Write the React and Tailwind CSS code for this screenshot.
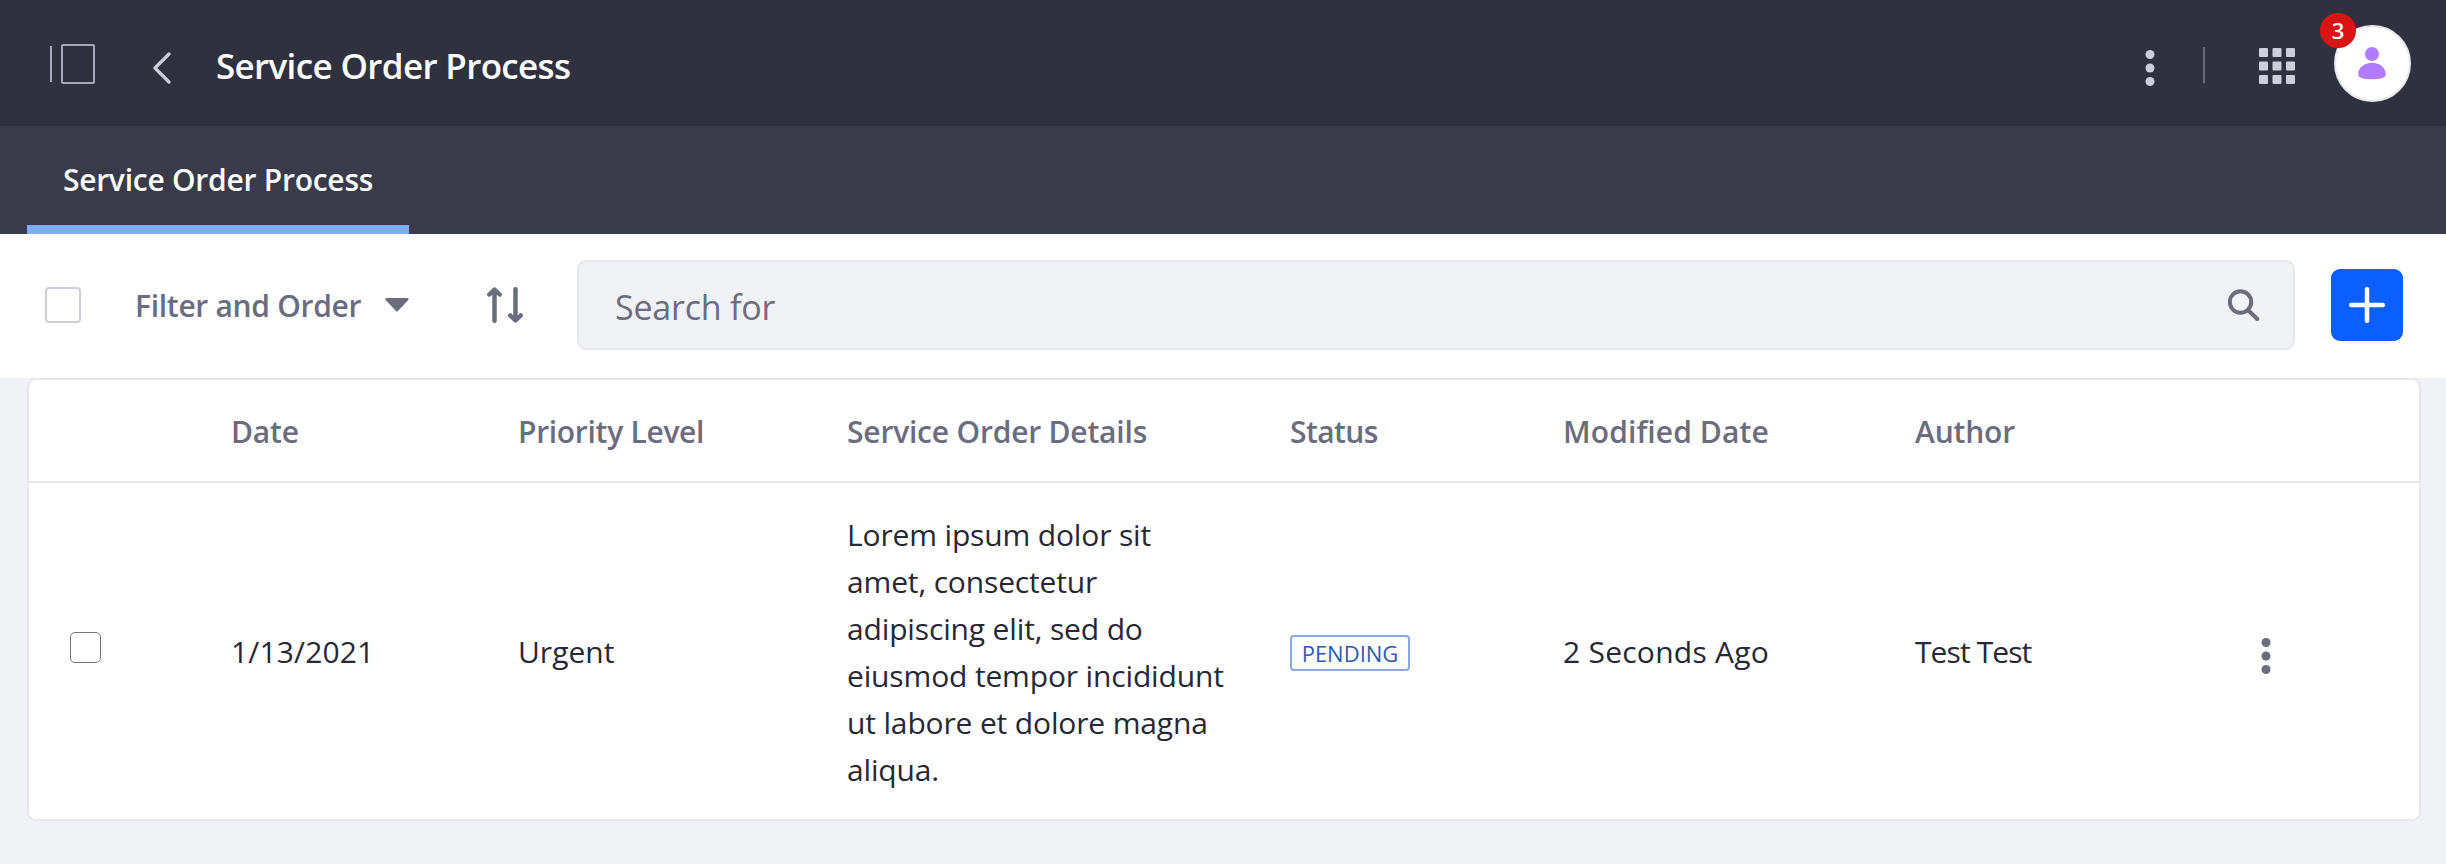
const headers = [
  ["Date", "tracking-[-0.2px]"],
  ["Priority Level", "tracking-[-0.3px]"],
  ["Service Order Details", "tracking-[-0.2px]"],
  ["Status", "tracking-[-0.6px]"],
  ["Modified Date", "tracking-[0.1px]"],
  ["Author", "tracking-[-0.2px]"],
];

const lines = [
  "Lorem ipsum dolor sit",
  "amet, consectetur",
  "adipiscing elit, sed do",
  "eiusmod tempor incididunt",
  "ut labore et dolore magna",
  "aliqua.",
];

const columns = "grid grid-cols-[202px_287px_329px_443px_273px_352px_1fr]";

function Dots({ className }) {
  return (
    <svg className={className} width="36" height="36" viewBox="0 0 36 36" fill="currentColor">
      <circle cx="18" cy="4.5" r="4.5" />
      <circle cx="18" cy="18" r="4.5" />
      <circle cx="18" cy="31.5" r="4.5" />
    </svg>
  );
}

function Header() {
  return (
    <header className="flex h-[126px] items-center bg-[#30313f] text-[#cdced9]">
      <svg className="mt-[2px] ml-[50px] shrink-0" width="45" height="40" viewBox="0 0 45 40" fill="none" stroke="#a7a9bc" strokeWidth="2">
        <path d="M1 2v36" />
        <rect x="12" y="1" width="32" height="38" rx="1" />
      </svg>
      <svg className="mt-[10px] ml-[58px] shrink-0" width="18" height="32" viewBox="0 0 18 32" fill="none" stroke="currentColor" strokeWidth="3.2" strokeLinecap="round" strokeLinejoin="round">
        <path d="M16 2 2 16l14 14" />
      </svg>
      <h1 className="mt-[5px] ml-[45px] text-[35px] leading-[54px] font-semibold tracking-[-0.65px] whitespace-nowrap text-white">Service Order Process</h1>
      <div className="ml-auto flex items-center">
        <Dots className="mt-[10px]" />
        <div className="mt-[4px] mr-[54px] ml-[35px] h-9 w-[2px] bg-[#6b6c7e]" />
        <svg className="mt-[6px]" width="36" height="36" viewBox="0 0 36 36" fill="currentColor">
          {[0, 13.5, 27].map((y) =>
            [0, 13.5, 27].map((x) => <rect key={`${x}-${y}`} x={x} y={y} width="9" height="9" rx="1" />)
          )}
        </svg>
        <div className="relative mr-[35px] ml-[39px] flex size-[77px] items-center justify-center rounded-full border-2 border-[#e7e7ed] bg-white">
          <svg className="mr-px" width="28" height="33" viewBox="0 0 28 33" fill="#b07bff">
            <circle cx="14" cy="7" r="7" />
            <path d="M14 15.8C6 15.8.2 21 .2 27.2c0 3.800 6 5 13.800 5s13.800-1.200 13.800-5c0-6.200-5.800-11.400-13.800-11.400z" />
          </svg>
          <span className="absolute -top-[14px] -left-[16px] flex h-[35px] w-9 items-center justify-center rounded-full bg-[#da1414] text-[22px] font-semibold text-white">3</span>
        </div>
      </div>
    </header>
  );
}

function Toolbar() {
  return (
    <div className="flex h-36 items-center bg-white pb-[2px] pl-[45px] text-[#6b6c7e]">
      <div className="size-9 shrink-0 rounded-[4px] border-2 border-[#cdced9]" />
      <div className="ml-[54px] flex w-[274px] items-center justify-between">
        <span className="text-[30px] font-semibold tracking-[-0.3px] whitespace-nowrap">Filter and Order</span>
        <svg className="shrink-0" width="24" height="14" viewBox="0 0 24 14" fill="currentColor">
          <path d="M1.500 0h21c1 0 1.500 1.200.8 2L13 13c-.6.700-1.400.7-2 0L.7 2C0 1.200.5 0 1.500 0z" />
        </svg>
      </div>
      <svg className="ml-[78px] shrink-0" width="36" height="36" viewBox="0 0 36 36" fill="none" stroke="currentColor" strokeWidth="4.500" strokeLinecap="round" strokeLinejoin="round">
        <path d="M7.500 33.700V3M2.300 7.500l5.200-5 5.200 5" />
        <path d="M28.500 2.300V33M23.300 28.500l5.200 5 5.200-5" />
      </svg>
      <div className="ml-[54px] flex h-[90px] w-[1718px] items-center justify-between rounded-[9px] border-2 border-[#e7e7ed] bg-[#f1f2f5] pr-[33px] pl-[36px]">
        <span className="pt-[4px] text-[34px] tracking-[-0.2px]">Search for</span>
        <svg width="32" height="32" viewBox="0 0 32 32" fill="none" stroke="currentColor" strokeWidth="4" strokeLinecap="round">
          <circle cx="12.500" cy="13" r="10.700" />
          <path d="m21 22 8.200 8" />
        </svg>
      </div>
      <button className="ml-9 flex size-[72px] items-center justify-center rounded-[9px] bg-[#0b5fff]">
        <svg width="36" height="36" viewBox="0 0 36 36" stroke="#fff" strokeWidth="4.500" strokeLinecap="round">
          <path d="M18 2.250v31.500M2.250 18h31.500" />
        </svg>
      </button>
    </div>
  );
}

export default function App() {
  return (
    <div className="h-[864px] w-[2446px] overflow-hidden bg-[#f1f2f5] font-['Open_Sans','Noto_Sans',sans-serif]">
      <Header />
      <nav className="flex h-[108px] bg-[#393a4a] pl-[27px]">
        <div className="flex w-[382px] items-center justify-center border-b-[9px] border-[#80acff] pt-2 text-[30px] font-semibold tracking-[-0.25px] whitespace-nowrap text-white">
          Service Order Process
        </div>
      </nav>
      <Toolbar />
      <main className="mr-[25px] ml-[27px] h-[443px] rounded-[9px] border-2 border-[#e7e7ed] bg-white text-[30px] whitespace-nowrap">
        <div className={`${columns} h-[103px] items-center border-b-2 border-[#e7e7ed] pt-[2px] font-semibold text-[#6b6c7e]`}>
          <span />
          {headers.map(([label, tracking]) => (
            <span key={label} className={tracking}>{label}</span>
          ))}
        </div>
        <div className={`${columns} h-[336px] items-center text-[#272833]`}>
          <div className="mb-[7px] ml-[41px] size-[31px] rounded-[5px] border border-[#767676]" />
          <span className="tracking-[0.15px]">1/13/2021</span>
          <span>Urgent</span>
          <div className="pt-[2px] leading-[47px] tracking-[-0.15px]">
            {lines.map((line) => (
              <div key={line}>{line}</div>
            ))}
          </div>
          <div className="pt-[4px]">
            <span className="flex h-9 w-[120px] items-center justify-center rounded-[4px] border-2 border-[#89a7e0] text-[22px] text-[#2e5aac]">PENDING</span>
          </div>
          <span className="tracking-[0.25px]">2 Seconds Ago</span>
          <div className="flex items-center">
            <span className="w-[333px] tracking-[-0.9px]">Test Test</span>
            <Dots className="mt-[9px] text-[#6b6c7e]" />
          </div>
        </div>
      </main>
    </div>
  );
}
